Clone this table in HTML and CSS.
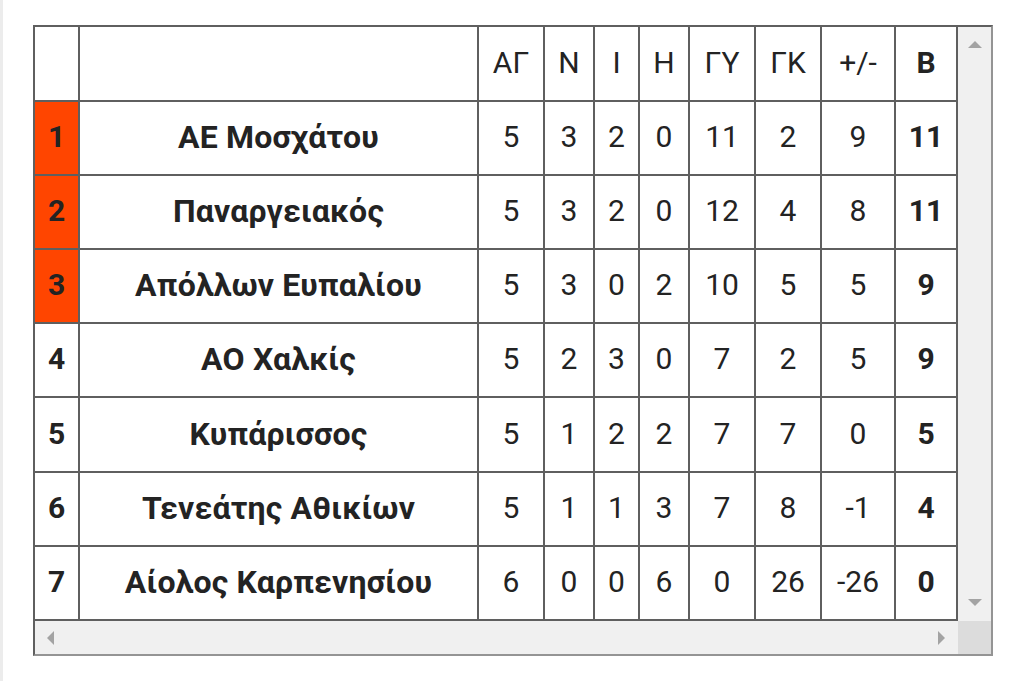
FILE: index.html
```html
<!DOCTYPE html>
<html lang="el">
<head>
<meta charset="utf-8">
<title>Βαθμολογία</title>
<link rel="stylesheet" href="styles.css">
</head>
<body>
<div class="edge"></div>
<div class="frame">
  <div class="standings">
    <div class="c h"></div><div class="c h"></div><div class="c h">ΑΓ</div><div class="c h">Ν</div><div class="c h">Ι</div><div class="c h">Η</div><div class="c h">ΓΥ</div><div class="c h">ΓΚ</div><div class="c h">+/-</div><div class="c h b">Β</div>

    <div class="c pos top">1</div><div class="c team">ΑΕ Μοσχάτου</div><div class="c">5</div><div class="c">3</div><div class="c">2</div><div class="c">0</div><div class="c">11</div><div class="c">2</div><div class="c">9</div><div class="c b">11</div>

    <div class="c pos top">2</div><div class="c team">Παναργειακός</div><div class="c">5</div><div class="c">3</div><div class="c">2</div><div class="c">0</div><div class="c">12</div><div class="c">4</div><div class="c">8</div><div class="c b">11</div>

    <div class="c pos top">3</div><div class="c team">Απόλλων Ευπαλίου</div><div class="c">5</div><div class="c">3</div><div class="c">0</div><div class="c">2</div><div class="c">10</div><div class="c">5</div><div class="c">5</div><div class="c b">9</div>

    <div class="c pos">4</div><div class="c team">ΑΟ Χαλκίς</div><div class="c">5</div><div class="c">2</div><div class="c">3</div><div class="c">0</div><div class="c">7</div><div class="c">2</div><div class="c">5</div><div class="c b">9</div>

    <div class="c pos">5</div><div class="c team">Κυπάρισσος</div><div class="c">5</div><div class="c">1</div><div class="c">2</div><div class="c">2</div><div class="c">7</div><div class="c">7</div><div class="c">0</div><div class="c b">5</div>

    <div class="c pos">6</div><div class="c team">Τενεάτης Αθικίων</div><div class="c">5</div><div class="c">1</div><div class="c">1</div><div class="c">3</div><div class="c">7</div><div class="c">8</div><div class="c">-1</div><div class="c b">4</div>

    <div class="c pos">7</div><div class="c team">Αίολος Καρπενησίου</div><div class="c">6</div><div class="c">0</div><div class="c">0</div><div class="c">6</div><div class="c">0</div><div class="c">26</div><div class="c">-26</div><div class="c b">0</div>
  </div>
  <div class="vscroll">
    <span class="arrow up"></span>
    <span class="arrow down"></span>
  </div>
  <div class="hscroll">
    <span class="arrow left"></span>
    <span class="arrow right"></span>
  </div>
  <div class="corner"></div>
</div>
</body>
</html>
```
FILE: styles.css
```css
* { box-sizing: border-box; }
html, body { margin: 0; padding: 0; background: #fff; }
body {
  width: 1024px;
  height: 681px;
  overflow: hidden;
  position: relative;
  font-family: Roboto, "Noto Sans", "DejaVu Sans", sans-serif;
  color: #232323;
}
.edge {
  position: absolute;
  left: 0;
  top: 0;
  width: 3px;
  height: 681px;
  background: #ececec;
}
.frame {
  margin: 25px 0 0 33px;
  width: 960px;
  height: 631px;
  border: 2px solid #949494;
  border-left-color: #5f5f5f;
  border-top-color: #5f5f5f;
  display: grid;
  grid-template-columns: 923px 33px;
  grid-template-rows: 594px 33px;
  background: #f0f0f0;
}
.standings {
  display: grid;
  grid-template-columns: 43px 397px 64px 48px 43px 48px 64px 64px 72px 60px;
  grid-template-rows: 73px 72px 72px 72px 72px 73px 72px 72px;
  gap: 2px;
  padding: 0 2px 2px 0;
  background: #5f5f5f;
}
.c {
  background: #fff;
  display: flex;
  align-items: center;
  justify-content: center;
  font-size: 30px;
  line-height: 1;
  white-space: nowrap;
  padding-bottom: 2px;
}
.b, .pos, .team { font-weight: 700; }
.team { font-size: 32px; letter-spacing: 0.2px; }
.pos.top { background: #ff4500; }
.vscroll {
  background: #f0f0f0;
  display: flex;
  flex-direction: column;
  justify-content: space-between;
  align-items: center;
  padding: 14px 0 15px;
}
.hscroll {
  background: #f0f0f0;
  display: flex;
  justify-content: space-between;
  align-items: center;
  padding: 0 13px 0 12px;
}
.corner { background: #dcdcdc; }
.arrow { width: 0; height: 0; display: block; }
.up {
  border-left: 7px solid transparent;
  border-right: 7px solid transparent;
  border-bottom: 7px solid #a3a3a3;
}
.down {
  border-left: 7px solid transparent;
  border-right: 7px solid transparent;
  border-top: 7px solid #a3a3a3;
}
.left {
  border-top: 7px solid transparent;
  border-bottom: 7px solid transparent;
  border-right: 7px solid #a3a3a3;
}
.right {
  border-top: 7px solid transparent;
  border-bottom: 7px solid transparent;
  border-left: 7px solid #a3a3a3;
}
```
